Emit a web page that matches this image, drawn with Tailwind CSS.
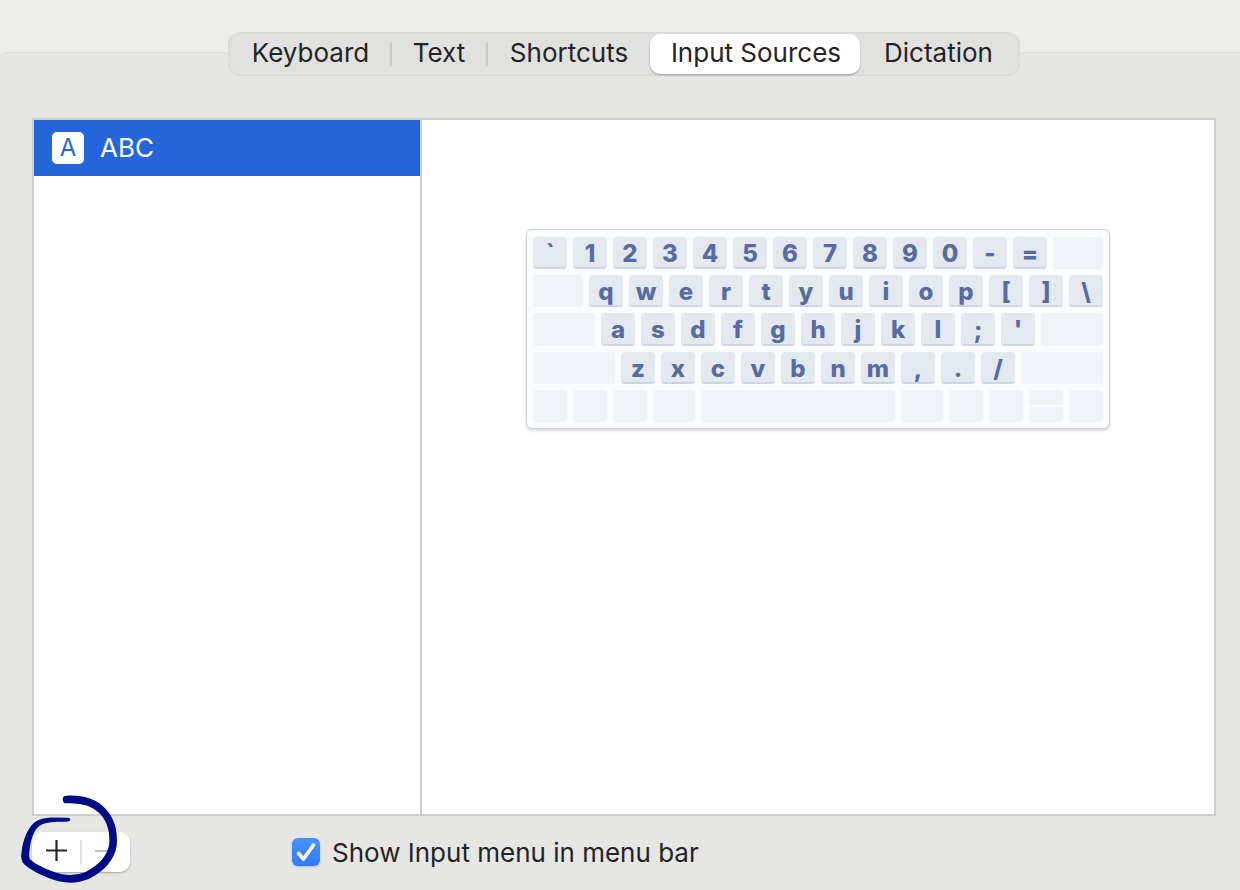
<!DOCTYPE html>
<html lang="en">
<head>
<meta charset="utf-8">
<meta name="viewport" content="width=device-width, initial-scale=1">
<title>Keyboard</title>
<script src="https://cdn.jsdelivr.net/npm/@tailwindcss/browser@4"></script>
</head>
<body class="flex min-h-screen flex-col bg-[#eeeeec] font-[Inter,sans-serif] text-[26px] leading-8 text-[#242424]">
<header class="h-[52px]"></header>
<main class="flex flex-1 flex-col rounded-tl-md border-t border-[#dededc] bg-[#e6e6e4] pr-6 pl-8">
  <nav aria-label="Keyboard settings" class="-mt-[21px] flex justify-center">
    <div role="tablist" class="flex h-11 items-center rounded-xl border border-[#d8d8d6] bg-[#e1e1df] shadow-[inset_0_0_3px_rgba(0,0,0,0.04)]">
      <button role="tab" aria-selected="false" class="h-10 w-[161px] pb-0.5 pl-0.5">Keyboard</button>
      <span class="h-6 w-0.5 bg-[#cacac8]"></span>
      <button role="tab" aria-selected="false" class="h-10 w-[94px] pb-0.5">Text</button>
      <span class="h-6 w-0.5 bg-[#cacac8]"></span>
      <button role="tab" aria-selected="false" class="h-10 w-[162px] pb-0.5">Shortcuts</button>
      <button role="tab" aria-selected="true" class="h-10 w-[210px] rounded-[10px] bg-white pb-0.5 pl-0.5 shadow-[0_1px_2px_rgba(0,0,0,0.3)]">Input Sources</button>
      <button role="tab" aria-selected="false" class="h-10 w-[159px] pr-0.5 pb-0.5">Dictation</button>
    </div>
  </nav>

  <section class="mt-[42px] flex flex-1 border-2 border-[#cececc] bg-white">
    <ul class="w-[388px] shrink-0 border-r-2 border-[#cececc]">
      <li>
        <button class="flex h-14 w-full items-center gap-4 bg-[#2465d9] pl-[18px] text-left text-white">
          <span class="flex size-8 items-center justify-center rounded-[5px] bg-white text-2xl text-[#2465d9]">A</span>
          <span>ABC</span>
        </button>
      </li>
    </ul>
    <div class="flex flex-1 items-start justify-center pt-[109px]">
      <div class="flex flex-col gap-1.5 rounded-md border border-[#cdd2de] bg-[#fbfcfe] px-1.5 pt-[7px] pb-1.5 text-2xl leading-[34px] font-extrabold text-[#586ca1] shadow-[0_2px_3px_rgba(0,0,0,0.15)] [&_i]:block [&_i]:rounded-sm [&_i]:bg-[#f0f3f8] [&_kbd]:w-[34px] [&_kbd]:rounded [&_kbd]:border-b-2 [&_kbd]:border-[#cdd5e3] [&_kbd]:bg-[#e4e9f0] [&_kbd]:text-center [&_kbd]:font-[Inter,sans-serif]">
        <div class="flex h-8 gap-1.5"><kbd>`</kbd><kbd>1</kbd><kbd>2</kbd><kbd>3</kbd><kbd>4</kbd><kbd>5</kbd><kbd>6</kbd><kbd>7</kbd><kbd>8</kbd><kbd>9</kbd><kbd>0</kbd><kbd>-</kbd><kbd>=</kbd><i class="w-[50px]"></i></div>
        <div class="flex h-8 gap-1.5"><i class="w-[50px]"></i><kbd>q</kbd><kbd>w</kbd><kbd>e</kbd><kbd>r</kbd><kbd>t</kbd><kbd>y</kbd><kbd>u</kbd><kbd>i</kbd><kbd>o</kbd><kbd>p</kbd><kbd>[</kbd><kbd>]</kbd><kbd>\</kbd></div>
        <div class="flex h-[33px] gap-1.5"><i class="w-[62px]"></i><kbd>a</kbd><kbd>s</kbd><kbd>d</kbd><kbd>f</kbd><kbd>g</kbd><kbd>h</kbd><kbd>j</kbd><kbd>k</kbd><kbd>l</kbd><kbd>;</kbd><kbd>'</kbd><i class="w-[62px]"></i></div>
        <div class="flex h-8 gap-1.5"><i class="w-[82px]"></i><kbd>z</kbd><kbd>x</kbd><kbd>c</kbd><kbd>v</kbd><kbd>b</kbd><kbd>n</kbd><kbd>m</kbd><kbd>,</kbd><kbd>.</kbd><kbd>/</kbd><i class="w-[82px]"></i></div>
        <div class="flex h-8 gap-1.5"><i class="w-[34px]"></i><i class="w-[34px]"></i><i class="w-[34px]"></i><i class="w-[42px]"></i><i class="w-[194px]"></i><i class="w-[42px]"></i><i class="w-[34px]"></i><i class="w-[34px]"></i><span class="flex w-[34px] flex-col gap-0.5"><i class="flex-1 rounded-b-none!"></i><i class="flex-1 rounded-t-none!"></i></span><i class="w-[34px]"></i></div>
      </div>
    </div>
  </section>

  <footer class="flex items-center pt-4 pb-[18px]">
    <div class="relative flex h-10 w-[98px] items-center rounded-[10px] bg-white shadow-[0_1px_2px_rgba(0,0,0,0.3)]">
      <button aria-label="Add input source" class="flex h-10 w-12 items-center justify-center">
        <svg class="size-6" viewBox="0 0 24 24" fill="none" stroke="#262626" stroke-width="2.200"><path d="M2 10.500h21M12.500 0v21"/></svg>
      </button>
      <span class="h-6 w-0.5 bg-[#e4e4e4]"></span>
      <button aria-label="Remove input source" disabled class="flex h-10 w-12 items-center justify-center">
        <svg class="size-6" viewBox="0 0 24 24" fill="none" stroke="#bfbfbf" stroke-width="2"><path d="M1 11h21"/></svg>
      </button>
      <svg class="pointer-events-none absolute -top-[52px] -left-8 h-[110px] w-40" viewBox="0 0 160 110" aria-hidden="true">
        <path fill="none" stroke="#000b84" stroke-width="7.600" stroke-linecap="round" stroke-linejoin="round" d="M66.500 19.500C82 18.800 94 22 102.500 31C112 41 114 52 113 65C110.500 79 100 89 87 95.500C74 101 61 99 50 94.500C41 91 33 87 28 82.500C25.500 81 25 79 25.200 76"/>
        <path fill="#000b84" d="M21.300 77C21.500 67 24 57 29 49C34 40 42 38 52 37.500L68 37.800C71 38.200 71 41 68 41.500C59 42 49 41.500 43 44C37 46 34 52 32 58C30 65 28.800 71 29.500 79Z"/>
      </svg>
    </div>
    <label class="ml-[162px] flex items-center gap-3">
      <span class="relative size-7">
        <input type="checkbox" checked class="block size-7 appearance-none rounded-md bg-linear-to-b from-[#4893f8] to-[#2f7af6] shadow-[0_1px_2px_rgba(30,100,240,0.3)]">
        <svg class="pointer-events-none absolute inset-0 size-7" viewBox="0 0 28 28" fill="none" stroke="#fff" stroke-width="3.600" stroke-linecap="round" stroke-linejoin="round" aria-hidden="true"><path d="M6.500 15.500L11.500 21L21.500 7"/></svg>
      </span>
      <span class="pt-0.5">Show Input menu in menu bar</span>
    </label>
  </footer>
</main>
</body>
</html>
